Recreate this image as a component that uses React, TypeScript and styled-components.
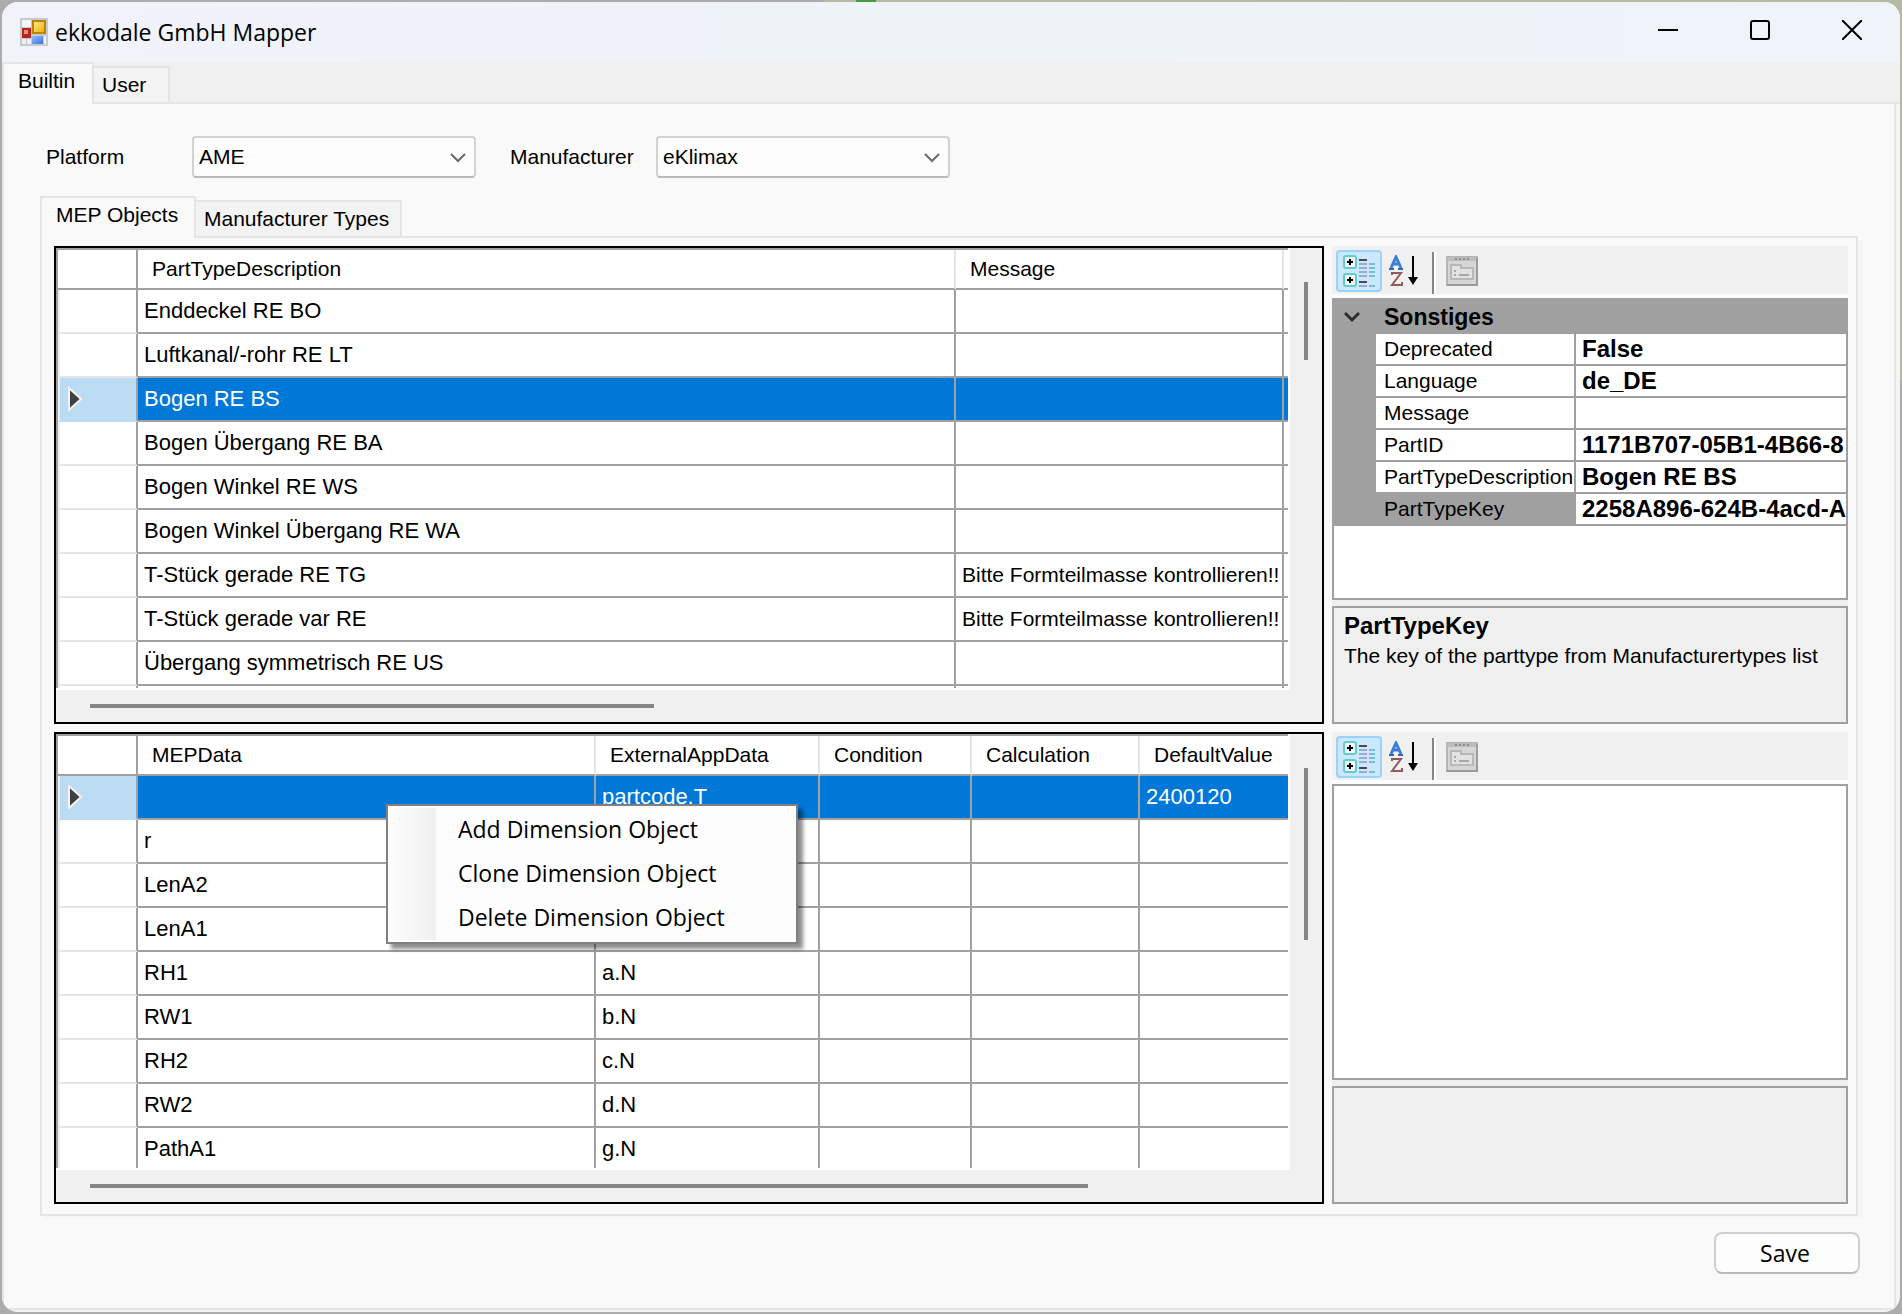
import React, { useState } from "react";
import styled, { createGlobalStyle, css } from "styled-components";

const color = {
  line: "#a0a0a0",
  soft: "#e5e5e5",
  face: "#f0f0f0",
  page: "#f9f9f9",
  select: "#0078d7",
  thumb: "#858585",
};

const sans = `"Liberation Sans", Arial, sans-serif`;
const ui = `"Open Sans", "Noto Sans", sans-serif`;

const GlobalStyle = createGlobalStyle`
  *, *::before, *::after { box-sizing: border-box; }
  body {
    margin: 0;
    background:
      linear-gradient(#449c3c, #449c3c) 856px 0 / 20px 2px no-repeat,
      linear-gradient(#b8b9a2, #b8b9a2) 824px 0 / 100% 380px no-repeat,
      #acacac;
    font: 21px/24px ${sans};
    color: #000;
  }
  button, select { font: inherit; color: inherit; }
`;

const Window = styled.div`
  display: flex;
  flex-direction: column;
  height: 100vh;
  min-height: 900px;
  min-width: 1200px;
  border: 2px solid transparent;
  border-radius: 18px;
  background: #f4f4f4 padding-box;
  overflow: hidden;
`;

const TitleBar = styled.header`
  display: flex;
  align-items: center;
  height: 60px;
  flex: none;
  padding: 0 2px 0 18px;
  background: linear-gradient(90deg, #f0f3f9, #eef4f9);
`;

const Title = styled.h1`
  margin: 0 auto 0 7px;
  font: 400 23px/32px ${ui};
`;

const CaptionButton = styled.button`
  display: flex;
  align-items: center;
  justify-content: center;
  width: 92px;
  height: 56px;
  padding: 0;
  border: 0;
  background: none;
  align-self: flex-start;
`;

const TabStrip = styled.div<{ $tone: string }>`
  display: flex;
  align-items: flex-end;
  flex: none;
  height: 42px;
  border-bottom: 2px solid ${color.soft};
  background: ${(p) => p.$tone};
`;

const Tab = styled.button<{ $active: boolean; $width: number }>`
  width: ${(p) => p.$width}px;
  height: 36px;
  padding: 0 0 0 8px;
  border: 2px solid ${color.soft};
  border-left-width: 0;
  border-bottom-width: 0;
  background: #f3f3f3;
  text-align: left;
  white-space: nowrap;
  ${(p) =>
    p.$active &&
    css`
      height: 42px;
      margin-bottom: -2px;
      padding: 0 0 6px 14px;
      border-left-width: 2px;
      background: ${color.page};
    `}
`;

const Outer = styled.main`
  display: flex;
  flex-direction: column;
  flex: 1;
  min-height: 0;
  margin: 0 4px 2px 0;
  padding: 32px 36px 34px;
  border: solid ${color.soft};
  border-width: 0 2px 2px;
  background: ${color.page};
`;

const FormRow = styled.div`
  display: flex;
  align-items: center;
  flex: none;
  gap: 34px;
  padding-left: 6px;
  margin-bottom: 18px;
`;

const Field = styled.div`
  display: flex;
  align-items: center;
`;

const Label = styled.label`
  width: 146px;
`;

const SelectBox = styled.div<{ $width: number }>`
  position: relative;
  width: ${(p) => p.$width}px;
  svg {
    position: absolute;
    right: 10px;
    top: 16px;
    pointer-events: none;
  }
`;

const Select = styled.select`
  appearance: none;
  display: block;
  width: 100%;
  height: 42px;
  padding: 0 36px 0 5px;
  border: 2px solid #d2d2d2;
  border-bottom-color: #bbb;
  border-radius: 4px;
  background: #fdfdfd;
`;

const Workspace = styled.section`
  display: grid;
  grid-template-columns: minmax(0, 1fr) 516px;
  grid-template-rows: minmax(0, 478fr) minmax(0, 472fr);
  gap: 8px;
  flex: 1;
  min-height: 0;
  padding: 8px 8px 10px 12px;
  border: 2px solid ${color.soft};
  border-top: 0;
  box-shadow: 4px 2px 0 #f4f4f4;
`;

const Footer = styled.footer`
  display: flex;
  justify-content: flex-end;
  flex: none;
  padding-top: 16px;
  margin-right: -2px;
`;

const SaveButton = styled.button`
  width: 146px;
  height: 42px;
  padding: 0 4px 0 0;
  border: 2px solid #d0d0d0;
  border-bottom-color: #bbb;
  border-radius: 8px;
  background: #fdfdfd;
  font: 23px/30px ${ui};
`;

/* Data grids */

const GridFrame = styled.div`
  position: relative;
  display: grid;
  grid-template-columns: minmax(0, 1fr) 32px;
  grid-template-rows: minmax(0, 1fr) 32px;
  border: 2px solid #000;
  background: ${color.face};
`;

const Pane = styled.div`
  display: flex;
  padding: 0 2px 2px 0;
  background: #fff;
  min-height: 0;
`;

const Viewport = styled.div`
  flex: 1;
  min-width: 0;
  overflow: hidden;
  border: solid ${color.line};
  border-width: 2px 0 0 2px;
`;

const DataTable = styled.table`
  table-layout: fixed;
  width: 100%;
  border-collapse: separate;
  border-spacing: 0;
  background: #fff;
`;

const HeadCell = styled.th`
  height: 40px;
  padding: 0 0 0 14px;
  border-right: 2px solid ${color.soft};
  border-bottom: 2px solid ${color.line};
  font-weight: 400;
  text-align: left;
  white-space: nowrap;
  &:first-child { border-right-color: ${color.line}; }
  &:last-child { border-right: 0; }
`;

const RowHead = styled.th<{ $current?: boolean }>`
  height: 44px;
  padding: 0 0 0 8px;
  border-left: 2px solid ${color.face};
  border-right: 2px solid ${color.line};
  border-bottom: 2px solid ${(p) => (p.$current ? "#bcdcf4" : color.soft)};
  background: ${(p) => (p.$current ? "#bcdcf4" : "#fff")};
  text-align: left;
  svg { display: block; }
`;

const Cell = styled.td<{ $selected?: boolean; $compact?: boolean }>`
  height: 44px;
  padding: 0 0 0 6px;
  border-right: 2px solid ${color.line};
  border-bottom: 2px solid ${color.line};
  background: ${(p) => (p.$selected ? color.select : "#fff")};
  color: ${(p) => (p.$selected ? "#fff" : "#000")};
  font-size: ${(p) => (p.$compact ? 21 : 22)}px;
  white-space: nowrap;
  overflow: hidden;
  &:last-child { border-right: 0; }
`;

const VTrack = styled.div`
  padding: 34px 0 0 14px;
`;

const HTrack = styled.div`
  padding: 14px 0 0 34px;
`;

const VThumb = styled.div<{ $size: number }>`
  width: 4px;
  height: ${(p) => p.$size}px;
  background: ${color.thumb};
`;

const HThumb = styled.div<{ $size: number }>`
  width: ${(p) => p.$size}px;
  height: 4px;
  background: ${color.thumb};
`;

const ContextMenu = styled.ul`
  position: absolute;
  left: 330px;
  top: 70px;
  width: 412px;
  margin: 0;
  padding: 2px;
  list-style: none;
  border: 2px solid #808080;
  background: linear-gradient(90deg, #fcfcfc, #f0f0f0) 0 0 / 46px 100% no-repeat content-box, #fdfdfd;
  box-shadow: 5px 5px 4px rgba(0, 0, 0, 0.45);
`;

const MenuButton = styled.button`
  display: block;
  width: 100%;
  height: 44px;
  padding: 0 0 2px 68px;
  border: 0;
  background: none;
  font: 23px/30px ${ui};
  text-align: left;
`;

/* Property grids */

const PropertyPane = styled.aside`
  display: flex;
  flex-direction: column;
  min-height: 0;
  background: ${color.face};
`;

const Toolbar = styled.div`
  display: flex;
  align-items: center;
  flex: none;
  height: 52px;
  padding: 2px 4px 0;
  border-bottom: 4px solid #fafcfe;
`;

const ToolButton = styled.button<{ $checked?: boolean }>`
  display: flex;
  align-items: center;
  justify-content: center;
  width: 46px;
  height: 42px;
  padding: 0;
  border: 2px solid ${(p) => (p.$checked ? "#99d1ff" : "transparent")};
  border-radius: 4px;
  background: ${(p) => (p.$checked ? "#cce8ff" : "none")};
`;

const Separator = styled.span`
  width: 4px;
  height: 42px;
  margin: 4px 3px 0 4px;
  border-left: 2px solid #858585;
  border-right: 2px solid #fff;
`;

const PropertyBox = styled.div`
  flex: 1;
  min-height: 0;
  overflow: hidden;
  margin-bottom: 6px;
  border: 2px solid ${color.line};
  background: #fff;
`;

const PropertyTable = styled.table`
  table-layout: fixed;
  width: 100%;
  border-collapse: separate;
  border-spacing: 0;
`;

const Gutter = styled.td`
  padding: 0;
  background: ${color.line};
`;

const Category = styled.th`
  height: 34px;
  padding: 0;
  background: ${color.line};
  text-align: left;
`;

const CategoryButton = styled.button`
  display: flex;
  align-items: center;
  gap: 24px;
  height: 34px;
  padding: 0 0 0 10px;
  border: 0;
  background: none;
  font: 700 23px/28px ${sans};
`;

const PropName = styled.th<{ $active?: boolean }>`
  height: 32px;
  padding: 0 0 0 8px;
  border: solid ${color.line};
  border-width: 0 2px 2px 0;
  background: ${(p) => (p.$active ? color.line : "#fff")};
  font-weight: 400;
  text-align: left;
  white-space: nowrap;
  overflow: hidden;
`;

const PropValue = styled.td`
  height: 32px;
  padding: 0 0 0 6px;
  border-bottom: 2px solid ${color.line};
  font: 700 24px/28px ${sans};
  white-space: nowrap;
  overflow: hidden;
`;

const Description = styled.div`
  flex: none;
  height: 118px;
  padding: 3px 10px;
  border: 2px solid ${color.line};
`;

const DescriptionTitle = styled.h2`
  margin: 0;
  font: 700 24px/30px ${sans};
`;

const DescriptionText = styled.p`
  margin: 0;
  line-height: 30px;
`;

/* Drawings */

const AppIcon = () => (
  <svg width="28" height="28" viewBox="0 0 28 28" aria-hidden="true">
    <defs>
      <linearGradient id="gold" x1="0" y1="0" x2="1" y2="1">
        <stop offset="0" stopColor="#ffe68a" />
        <stop offset="1" stopColor="#eab010" />
      </linearGradient>
      <linearGradient id="blue" x1="0" y1="0" x2="1" y2="1">
        <stop offset="0" stopColor="#8fbcff" />
        <stop offset="1" stopColor="#3b74dd" />
      </linearGradient>
    </defs>
    <rect width="28" height="28" fill="#c6c9cd" />
    <rect x="2" y="2" width="9" height="7" fill="#f3f5fa" />
    <rect x="2" y="21" width="4" height="5" fill="#eceff5" />
    <rect x="7" y="21" width="4" height="5" fill="#eceff5" />
    <rect x="24" y="18" width="2" height="8" fill="#f3f5fa" />
    <rect x="2" y="10" width="9" height="10" fill="#b5251f" />
    <rect x="4" y="12" width="4" height="4" fill="#f08a7c" />
    <rect x="12" y="2" width="14" height="14" fill="#b98500" />
    <rect x="14" y="4" width="10" height="10" fill="url(#gold)" />
    <rect x="12" y="18" width="11" height="8" fill="url(#blue)" />
  </svg>
);

const Chevron = ({ bold = false }: { bold?: boolean }) => (
  <svg width="16" height="12" viewBox="0 0 16 12" fill="none" aria-hidden="true">
    <path
      d="M1 2l7 7 7-7"
      stroke={bold ? "#2b2b2b" : "#6a6a6a"}
      strokeWidth={bold ? 3 : 2}
    />
  </svg>
);

const CurrentArrow = () => (
  <svg width="16" height="24" viewBox="0 0 16 24" aria-hidden="true">
    <path d="M1 1v22l12-11z" fill="#404040" stroke="#f4f4f4" strokeWidth="2" />
  </svg>
);

const CategorizedIcon = () => (
  <svg width="32" height="32" viewBox="0 0 32 32" aria-hidden="true">
    {[0, 18].map((y) => (
      <g key={y} transform={`translate(0 ${y})`}>
        <rect x="1" y="1" width="12" height="12" rx="2" fill="#f4f8f8" stroke="#62cccc" strokeWidth="2" />
        <path d="M7 4v6M4 7h6" stroke="#000" strokeWidth="2" />
      </g>
    ))}
    <path d="M16 5h8M16 27h8" stroke="#4a4a4a" strokeWidth="2" />
    {[9, 13, 17, 21, 31].map((y) => (
      <g key={y} strokeWidth="2">
        <path d={`M16 ${y}h8M26 ${y}h6`} stroke="#a9a0d0" />
        <path d={`M18 ${y}h3M28 ${y}h4`} stroke="#62cccc" />
      </g>
    ))}
  </svg>
);

const SortIcon = () => (
  <svg width="32" height="32" viewBox="0 0 32 32" aria-hidden="true">
    <g fill="none" strokeWidth="3">
      <path d="M2 13L7 2l5 11M4 9h6" stroke="#3d7fd6" />
      <path d="M0 14h5M9 14h5" stroke="#3565b0" strokeWidth="2" />
      <path d="M3 20v-2h9L3 30h10v-3" stroke="#93595c" strokeWidth="2" />
      <path d="M24 1v22" stroke="#000" strokeWidth="2" />
    </g>
    <path d="M19 22h10l-5 8z" fill="#000" />
  </svg>
);

const PagesIcon = () => (
  <svg width="32" height="30" viewBox="0 0 32 30" fill="none" aria-hidden="true">
    <rect x="1" y="1" width="30" height="28" fill="#d6d6d6" stroke="#b4b4b4" strokeWidth="2" />
    <path d="M1 3h30" stroke="#bdbdbd" strokeWidth="4" />
    <path d="M9 3h14" stroke="#8c8c8c" strokeWidth="2" strokeDasharray="2 2" />
    <path d="M31 2v27H1" stroke="#9c9c9c" strokeWidth="2" />
    <path d="M5 23V9h10v3h12v11z" fill="#e2e2e2" stroke="#b8b8b8" strokeWidth="2" />
    <path d="M8 15h2M8 19h2M13 19h10" stroke="#a8a8a8" strokeWidth="2" />
  </svg>
);

/* Data */

const parts: string[][] = [
  ["Enddeckel RE BO", ""],
  ["Luftkanal/-rohr RE LT", ""],
  ["Bogen RE BS", ""],
  ["Bogen Übergang RE BA", ""],
  ["Bogen Winkel RE WS", ""],
  ["Bogen Winkel Übergang RE WA", ""],
  ["T-Stück gerade RE TG", "Bitte Formteilmasse kontrollieren!!"],
  ["T-Stück gerade var RE", "Bitte Formteilmasse kontrollieren!!"],
  ["Übergang symmetrisch RE US", ""],
  ["", ""],
];

const dimensions: string[][] = [
  ["", "partcode.T", "", "", "2400120"],
  ["r", "", "", "", ""],
  ["LenA2", "", "", "", ""],
  ["LenA1", "", "", "", ""],
  ["RH1", "a.N", "", "", ""],
  ["RW1", "b.N", "", "", ""],
  ["RH2", "c.N", "", "", ""],
  ["RW2", "d.N", "", "", ""],
  ["PathA1", "g.N", "", "", ""],
];

const properties: [string, string][] = [
  ["Deprecated", "False"],
  ["Language", "de_DE"],
  ["Message", ""],
  ["PartID", "1171B707-05B1-4B66-8"],
  ["PartTypeDescription", "Bogen RE BS"],
  ["PartTypeKey", "2258A896-624B-4acd-A"],
];

interface DataGridProps {
  headers: string[];
  widths: (number | undefined)[];
  rows: string[][];
  current: number;
  vThumb: number;
  hThumb: number;
  children?: React.ReactNode;
}

const DataGrid = ({ headers, widths, rows, current, vThumb, hThumb, children }: DataGridProps) => (
  <GridFrame>
    <Pane>
      <Viewport>
        <DataTable>
          <colgroup>
            <col width={80} />
            {widths.map((w, i) => (
              <col key={i} width={w} />
            ))}
          </colgroup>
          <thead>
            <tr>
              <HeadCell />
              {headers.map((h, i) => (
                <HeadCell key={i}>{h}</HeadCell>
              ))}
            </tr>
          </thead>
          <tbody>
            {rows.map((row, r) => (
              <tr key={r}>
                <RowHead $current={r === current}>{r === current && <CurrentArrow />}</RowHead>
                {headers.map((header, c) => (
                  <Cell key={c} $selected={r === current} $compact={header === "Message"}>
                    {row[c]}
                  </Cell>
                ))}
              </tr>
            ))}
          </tbody>
        </DataTable>
      </Viewport>
    </Pane>
    <VTrack>
      <VThumb $size={vThumb} />
    </VTrack>
    <HTrack>
      <HThumb $size={hThumb} />
    </HTrack>
    {children}
  </GridFrame>
);

const PropertyToolbar = () => (
  <Toolbar>
    <ToolButton $checked aria-label="Categorized">
      <CategorizedIcon />
    </ToolButton>
    <ToolButton aria-label="Alphabetical">
      <SortIcon />
    </ToolButton>
    <Separator />
    <ToolButton aria-label="Property pages" disabled>
      <PagesIcon />
    </ToolButton>
  </Toolbar>
);

export default function App() {
  const [platform, setPlatform] = useState("AME");
  const [maker, setMaker] = useState("eKlimax");

  return (
    <>
      <GlobalStyle />
      <Window>
        <TitleBar>
          <AppIcon />
          <Title>ekkodale GmbH Mapper</Title>
          <CaptionButton aria-label="Minimize">
            <svg width="20" height="20" viewBox="0 0 20 20" fill="none" stroke="#000" strokeWidth="2">
              <path d="M0 10h20" />
            </svg>
          </CaptionButton>
          <CaptionButton aria-label="Maximize">
            <svg width="20" height="20" viewBox="0 0 20 20" fill="none" stroke="#000" strokeWidth="2">
              <rect x="1" y="1" width="18" height="18" rx="2" />
            </svg>
          </CaptionButton>
          <CaptionButton aria-label="Close">
            <svg width="20" height="20" viewBox="0 0 20 20" fill="none" stroke="#000" strokeWidth="2">
              <path d="M0 0l20 20M20 0L0 20" />
            </svg>
          </CaptionButton>
        </TitleBar>

        <TabStrip role="tablist" $tone={color.face}>
          <Tab role="tab" aria-selected $active $width={92}>Builtin</Tab>
          <Tab role="tab" aria-selected={false} $active={false} $width={76}>User</Tab>
        </TabStrip>

        <Outer>
          <FormRow>
            <Field>
              <Label htmlFor="platform">Platform</Label>
              <SelectBox $width={284}>
                <Select id="platform" value={platform} onChange={(e) => setPlatform(e.target.value)}>
                  <option>AME</option>
                </Select>
                <Chevron />
              </SelectBox>
            </Field>
            <Field>
              <Label htmlFor="manufacturer">Manufacturer</Label>
              <SelectBox $width={294}>
                <Select id="manufacturer" value={maker} onChange={(e) => setMaker(e.target.value)}>
                  <option>eKlimax</option>
                </Select>
                <Chevron />
              </SelectBox>
            </Field>
          </FormRow>

          <TabStrip role="tablist" $tone={color.page}>
            <Tab role="tab" aria-selected $active $width={156}>MEP Objects</Tab>
            <Tab role="tab" aria-selected={false} $active={false} $width={206}>Manufacturer Types</Tab>
          </TabStrip>

          <Workspace>
            <DataGrid
              headers={["PartTypeDescription", "Message", ""]}
              widths={[undefined, 328, 4]}
              rows={parts}
              current={2}
              vThumb={78}
              hThumb={564}
            />

            <PropertyPane>
              <PropertyToolbar />
              <PropertyBox>
                <PropertyTable>
                  <colgroup>
                    <col width={42} />
                    <col width={200} />
                    <col />
                  </colgroup>
                  <thead>
                    <tr>
                      <Category colSpan={3}>
                        <CategoryButton>
                          <Chevron bold />
                          Sonstiges
                        </CategoryButton>
                      </Category>
                    </tr>
                  </thead>
                  <tbody>
                    {properties.map(([name, value]) => (
                      <tr key={name}>
                        <Gutter />
                        <PropName scope="row" $active={name === "PartTypeKey"}>{name}</PropName>
                        <PropValue>{value}</PropValue>
                      </tr>
                    ))}
                  </tbody>
                </PropertyTable>
              </PropertyBox>
              <Description>
                <DescriptionTitle>PartTypeKey</DescriptionTitle>
                <DescriptionText>The key of the parttype from Manufacturertypes list</DescriptionText>
              </Description>
            </PropertyPane>

            <DataGrid
              headers={["MEPData", "ExternalAppData", "Condition", "Calculation", "DefaultValue"]}
              widths={[undefined, 224, 152, 168, 148]}
              rows={dimensions}
              current={0}
              vThumb={172}
              hThumb={998}
            >
              <ContextMenu role="menu">
                {["Add", "Clone", "Delete"].map((verb) => (
                  <li key={verb} role="none">
                    <MenuButton role="menuitem">{verb} Dimension Object</MenuButton>
                  </li>
                ))}
              </ContextMenu>
            </DataGrid>

            <PropertyPane>
              <PropertyToolbar />
              <PropertyBox />
              <Description />
            </PropertyPane>
          </Workspace>

          <Footer>
            <SaveButton>Save</SaveButton>
          </Footer>
        </Outer>
      </Window>
    </>
  );
}
